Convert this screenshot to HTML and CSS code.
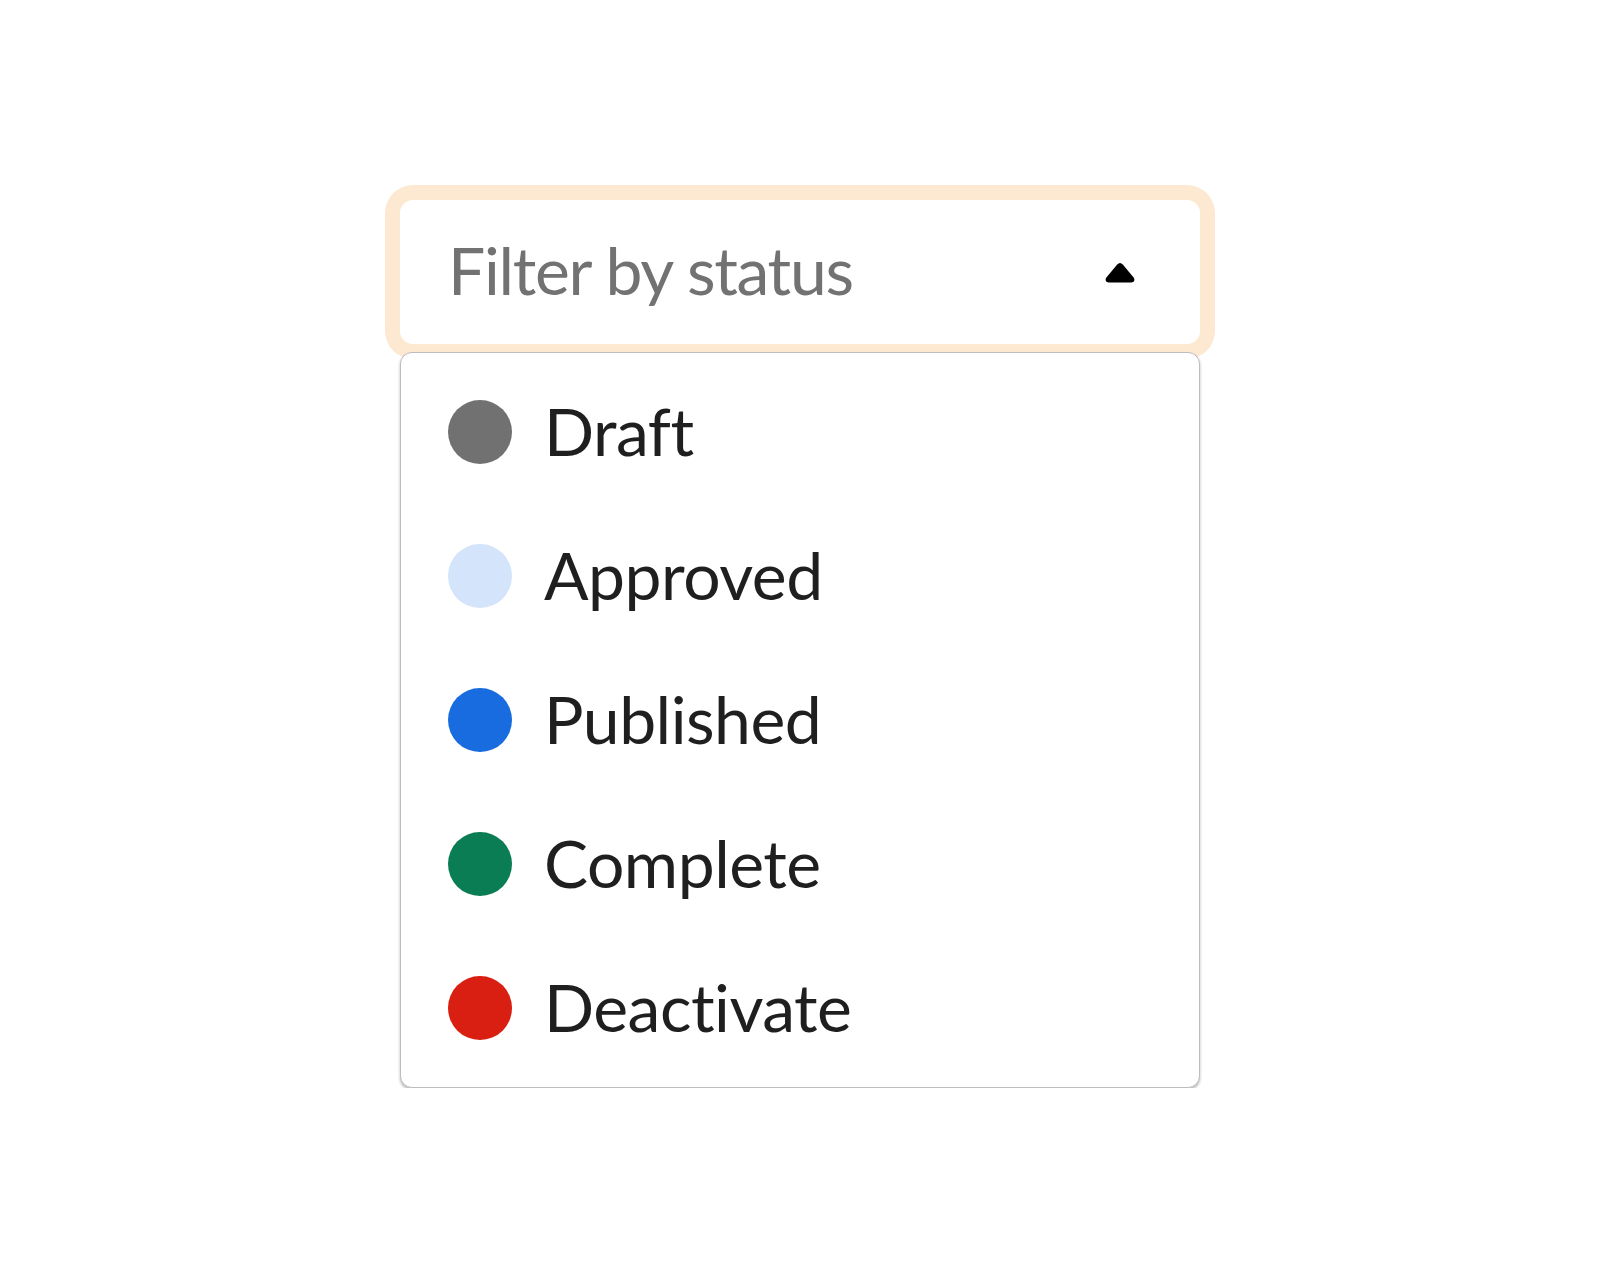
FILE: index.html
```html
<!DOCTYPE html>
<html lang="en">
<head>
<meta charset="utf-8">
<title>Filter by status</title>
<link rel="stylesheet" href="styles.css">
</head>
<body>
<div class="page">
  <div class="select">
    <button class="trigger" type="button">
      <span class="placeholder">Filter by status</span>
      <svg class="caret" width="32" height="22" viewBox="0 0 32 22" aria-hidden="true">
        <path d="M13.2 2.6 Q16 -0.6 18.8 2.6 L29.6 15.6 Q32 19.6 27.4 20.6 L4.6 20.6 Q0 19.6 2.4 15.6 Z" fill="#000"/>
      </svg>
    </button>
    <ul class="menu">
      <li class="option"><span class="dot dot-draft"></span><span class="label">Draft</span></li>
      <li class="option"><span class="dot dot-approved"></span><span class="label">Approved</span></li>
      <li class="option"><span class="dot dot-published"></span><span class="label">Published</span></li>
      <li class="option"><span class="dot dot-complete"></span><span class="label">Complete</span></li>
      <li class="option"><span class="dot dot-deactivate"></span><span class="label">Deactivate</span></li>
    </ul>
  </div>
</div>
</body>
</html>
```

FILE: styles.css
```css
* { box-sizing: border-box; }
html, body { margin: 0; padding: 0; background: #fff; }
body { font-family: Lato, "Open Sans", "Liberation Sans", sans-serif; }

.page {
  display: flex;
  justify-content: center;
  padding-top: 200px;
}

.select {
  width: 800px;
  display: flex;
  flex-direction: column;
  gap: 8px;
}

.trigger {
  height: 144px;
  width: 100%;
  border: none;
  border-radius: 13px;
  background: #fff;
  box-shadow: 0 0 0 15px #fde8d1;
  display: flex;
  align-items: center;
  justify-content: space-between;
  padding: 0 64px 0 48px;
  font: inherit;
  cursor: pointer;
}

.placeholder {
  font-size: 66px;
  font-weight: 400;
  color: #727272;
  letter-spacing: -1.3px;
  line-height: 1;
  margin-top: -4px;
}

.caret { display: block; margin-top: 2px; }

.menu {
  list-style: none;
  margin: 0;
  padding: 7px 0;
  border: 1px solid #bdbdbd;
  border-radius: 12px;
  background: #fff;
  box-shadow: 0 2px 3px rgba(0,0,0,0.28);
}

.option {
  height: 144px;
  display: flex;
  align-items: center;
  padding-left: 47px;
  gap: 32px;
}

.dot {
  width: 64px;
  height: 64px;
  border-radius: 50%;
  flex: none;
}
.dot-draft { background: #717171; }
.dot-approved { background: #d4e4fa; }
.dot-published { background: #186ce0; }
.dot-complete { background: #0a7d55; }
.dot-deactivate { background: #d91f11; }

.label {
  font-size: 66px;
  font-weight: 400;
  color: #1f1f1f;
  line-height: 1;
  letter-spacing: -0.5px;
  margin-top: -3px;
}
```
